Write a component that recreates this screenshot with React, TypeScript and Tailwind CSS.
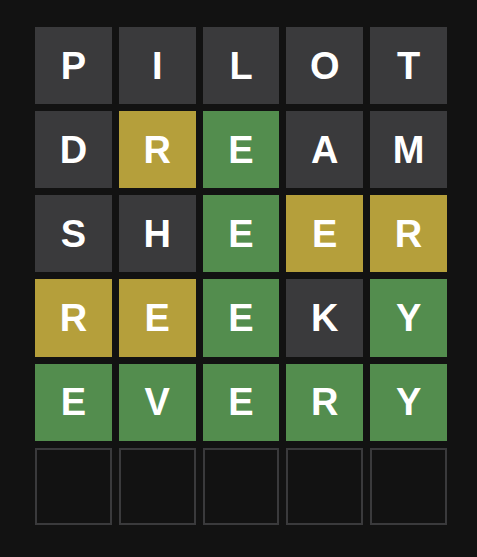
const rows: { l: string; s: 'a' | 'p' | 'c' }[][] = [
  [
    { l: 'P', s: 'a' },
    { l: 'I', s: 'a' },
    { l: 'L', s: 'a' },
    { l: 'O', s: 'a' },
    { l: 'T', s: 'a' },
  ],
  [
    { l: 'D', s: 'a' },
    { l: 'R', s: 'p' },
    { l: 'E', s: 'c' },
    { l: 'A', s: 'a' },
    { l: 'M', s: 'a' },
  ],
  [
    { l: 'S', s: 'a' },
    { l: 'H', s: 'a' },
    { l: 'E', s: 'c' },
    { l: 'E', s: 'p' },
    { l: 'R', s: 'p' },
  ],
  [
    { l: 'R', s: 'p' },
    { l: 'E', s: 'p' },
    { l: 'E', s: 'c' },
    { l: 'K', s: 'a' },
    { l: 'Y', s: 'c' },
  ],
  [
    { l: 'E', s: 'c' },
    { l: 'V', s: 'c' },
    { l: 'E', s: 'c' },
    { l: 'R', s: 'c' },
    { l: 'Y', s: 'c' },
  ],
];

const tileColor = {
  a: 'bg-[#3a3a3c]',
  p: 'bg-[#b59f3b]',
  c: 'bg-[#538d4e]',
};

export default function App() {
  return (
    <div className="w-[477px] h-[557px] bg-[#121212] pl-[35px] pt-[27px]">
      <div className="grid grid-cols-5 grid-rows-6 gap-[7px] w-[412px] h-[498px]">
        {rows.flat().map((t, i) => (
          <div
            key={i}
            className={`${tileColor[t.s]} flex items-center justify-center text-white font-bold text-[38px] leading-none`}
            style={{ fontFamily: '"Liberation Sans", Arial, sans-serif' }}
          >
            {t.l}
          </div>
        ))}
        {Array.from({ length: 5 }).map((_, i) => (
          <div key={'e' + i} className="border-2 border-[#3a3a3c]" />
        ))}
      </div>
    </div>
  );
}
